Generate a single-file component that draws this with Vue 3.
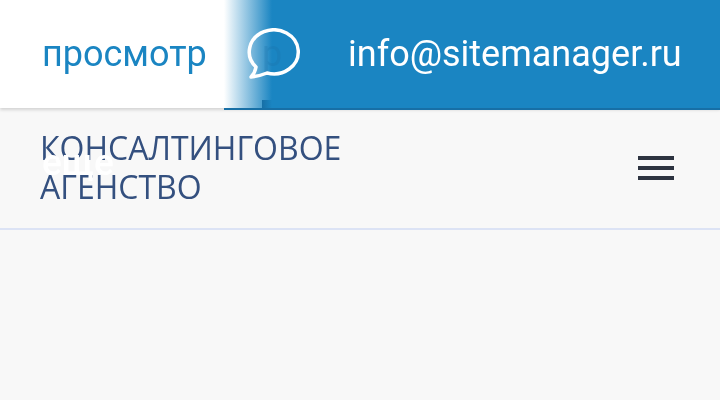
<script setup>
const title = "КОНСАЛТИНГОВОЕ АГЕНСТВО";
</script>

<template>
  <main class="page">
    <div class="topbar">
      <a class="view">просмотр</a>
      <div class="chat">
        <span class="ghost">р</span>
        <svg class="bubble" width="56" height="56" viewBox="0 0 56 56">
          <path d="M10 41 A24.500 22 0 1 1 21 47 Q14 50 5 51 Q9 47 10 41 Z" fill="none" stroke="#fff" stroke-width="3.500" stroke-linejoin="round" />
        </svg>
        <span class="notch"></span>
      </div>
      <a class="mail">info@sitemanager.ru</a>
    </div>
    <header class="head">
      <h1 class="title">{{ title }}</h1>
      <span class="more">еще</span>
      <button class="burger">
        <span></span>
        <span></span>
        <span></span>
      </button>
    </header>
  </main>
</template>

<style>
  body
  {
    background: #f8f8f8;
  }
</style>

<style scoped>
  .page
  {
    width: 720px;
    height: 400px;
    overflow: hidden;
    background: #f8f8f8;
    font-family: Roboto, sans-serif;
  }

  .topbar
  {
    display: flex;
    height: 108px;
    align-items: center;
    background: #1a85c2;
    box-shadow: 0 2px 3px rgba(0, 0, 0, 0.15);
    position: relative;
    z-index: 1;
  }

  .view
  {
    width: 224px;
    height: 100%;
    box-sizing: border-box;
    padding: 0 0 0 42px;
    display: flex;
    align-items: center;
    background: #fff;
    color: #1a85c2;
    font-size: 36px;
    filter: blur(0.3px);
  }

  .chat
  {
    width: 48px;
    height: 100%;
    position: relative;
    background: linear-gradient(to right, #fff, #1a85c2);
  }

  .ghost
  {
    position: absolute;
    left: 38px;
    top: 33px;
    font-size: 36px;
    color: #1a6fa6;
    opacity: 0.25;
  }

  .bubble
  {
    position: absolute;
    left: 22px;
    top: 26px;
    filter: blur(0.6px);
  }

  .notch
  {
    position: absolute;
    left: 38px;
    bottom: 0;
    width: 10px;
    height: 8px;
    background: linear-gradient(to right, #176fa6, #1a85c2);
  }

  .mail
  {
    margin-left: 76px;
    color: #fff;
    font-size: 36px;
    white-space: nowrap;
    filter: blur(0.3px);
  }

  .topbar::after
  {
    content: "";
    position: absolute;
    left: 224px;
    right: 0;
    top: 108px;
    height: 2px;
    background: #176fa6;
  }

  .head
  {
    height: 122px;
    box-sizing: border-box;
    padding: 20px 46px 0 40px;
    display: flex;
    justify-content: space-between;
    border-bottom: 2px solid #dce3f5;
    position: relative;
  }

  .title
  {
    margin: 0;
    width: 320px;
    font-family: "Open Sans", sans-serif;
    font-weight: 400;
    font-size: 32px;
    line-height: 39px;
    color: #34507f;
    filter: blur(0.3px);
  }

  .more
  {
    position: absolute;
    left: 42px;
    top: 33px;
    font-size: 37px;
    font-weight: 500;
    line-height: 44px;
    color: #fff;
    filter: blur(0.5px);
  }

  .burger
  {
    align-self: center;
    margin-top: -20px;
    display: flex;
    flex-direction: column;
    gap: 6px;
    width: 36px;
    padding: 0;
    border: 0;
    background: none;
  }

  .burger span
  {
    height: 4px;
    background: #2d3340;
  }
</style>
